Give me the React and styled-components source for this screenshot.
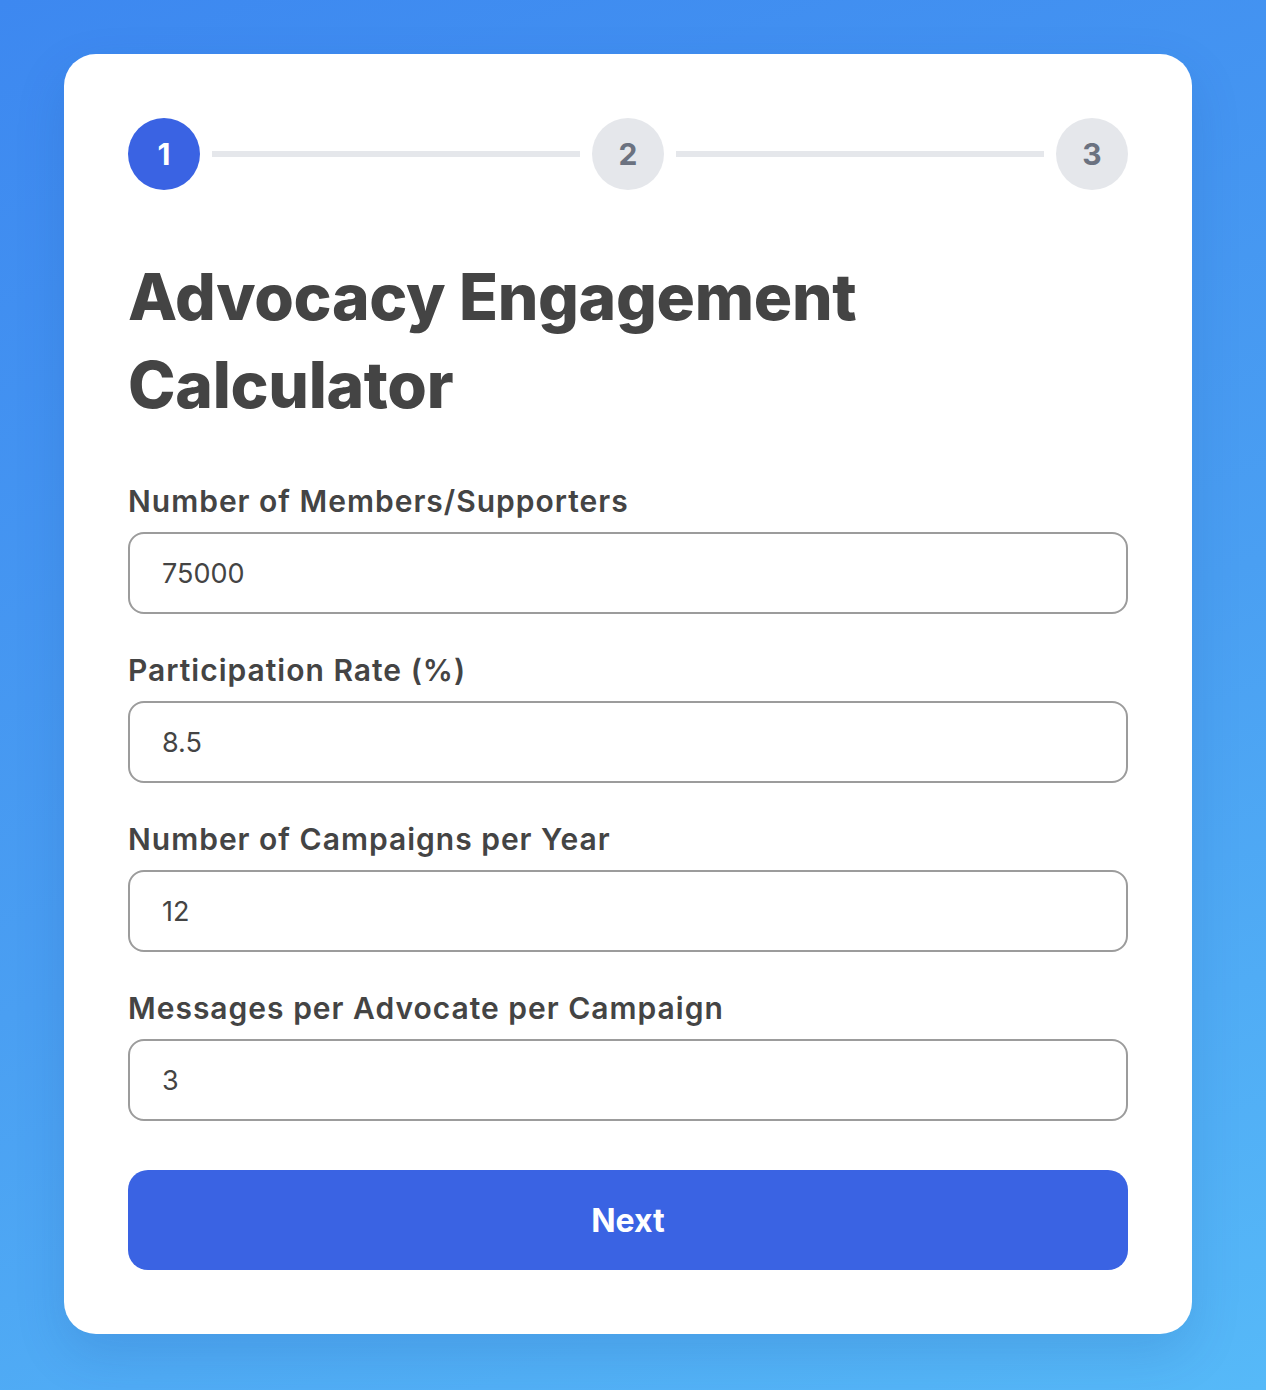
import React, { useState } from 'react';
import styled, { createGlobalStyle } from 'styled-components';

const GlobalStyle = createGlobalStyle`
  html, body {
    margin: 0;
    padding: 0;
  }
  body {
    font-family: Inter, "Noto Sans", sans-serif;
    background: linear-gradient(160deg, #3d88f0 0%, #4a9ff2 55%, #56b9f8 100%);
    min-height: 1390px;
  }
`;

const Page = styled.div`
  box-sizing: border-box;
  min-height: 1390px;
  padding: 54px 74px 56px 64px;
`;

const Card = styled.div`
  background: #ffffff;
  border-radius: 32px;
  padding: 64px;
  box-shadow: 0 20px 50px rgba(20, 60, 140, 0.15);
`;

const Steps = styled.div`
  display: flex;
  align-items: center;
  gap: 12px;
`;

const StepDot = styled.div`
  width: 72px;
  height: 72px;
  flex: none;
  border-radius: 50%;
  display: flex;
  align-items: center;
  justify-content: center;
  font-size: 30px;
  font-weight: 700;
  background: ${(p) => (p.$active ? '#3a63e3' : '#e5e7eb')};
  color: ${(p) => (p.$active ? '#ffffff' : '#6b7280')};
`;

const StepLine = styled.div`
  flex: 1;
  height: 6px;
  background: #e5e7eb;
`;

const Title = styled.h1`
  margin: 63px 0 54px;
  font-size: 64px;
  line-height: 88px;
  font-weight: 800;
  letter-spacing: -0.3px;
  color: #444444;
`;

const Form = styled.form`
  display: flex;
  flex-direction: column;
`;

const Field = styled.div`
  display: flex;
  flex-direction: column;
  gap: 13px;
  margin-bottom: 38px;
`;

const Label = styled.label`
  font-size: 30px;
  line-height: 36px;
  font-weight: 600;
  letter-spacing: 1px;
  color: #444444;
`;

const Input = styled.input`
  box-sizing: border-box;
  height: 82px;
  width: 100%;
  padding: 0 32px;
  border: 2px solid #9c9c9c;
  border-radius: 16px;
  font-family: Inter, "Noto Sans", sans-serif;
  font-size: 27px;
  color: #444444;
  background: #ffffff;
  outline: none;
`;

const Button = styled.button`
  margin-top: 11px;
  height: 100px;
  border: none;
  border-radius: 20px;
  background: #3a63e3;
  color: #ffffff;
  font-family: Inter, "Noto Sans", sans-serif;
  font-size: 32px;
  font-weight: 700;
  cursor: pointer;
`;

const fields = [
  { key: 'members', label: 'Number of Members/Supporters', value: '75000' },
  { key: 'rate', label: 'Participation Rate (%)', value: '8.5' },
  { key: 'campaigns', label: 'Number of Campaigns per Year', value: '12' },
  { key: 'messages', label: 'Messages per Advocate per Campaign', value: '3' },
];

export default function App() {
  const [values, setValues] = useState(
    Object.fromEntries(fields.map((f) => [f.key, f.value]))
  );

  return (
    <>
      <GlobalStyle />
      <Page>
        <Card>
          <Steps>
            <StepDot $active>1</StepDot>
            <StepLine />
            <StepDot>2</StepDot>
            <StepLine />
            <StepDot>3</StepDot>
          </Steps>
          <Title>
            Advocacy Engagement
            <br />
            Calculator
          </Title>
          <Form onSubmit={(e) => e.preventDefault()}>
            {fields.map((f) => (
              <Field key={f.key}>
                <Label htmlFor={f.key}>{f.label}</Label>
                <Input
                  id={f.key}
                  type="number"
                  value={values[f.key]}
                  onChange={(e) => setValues({ ...values, [f.key]: e.target.value })}
                />
              </Field>
            ))}
            <Button type="submit">Next</Button>
          </Form>
        </Card>
      </Page>
    </>
  );
}
